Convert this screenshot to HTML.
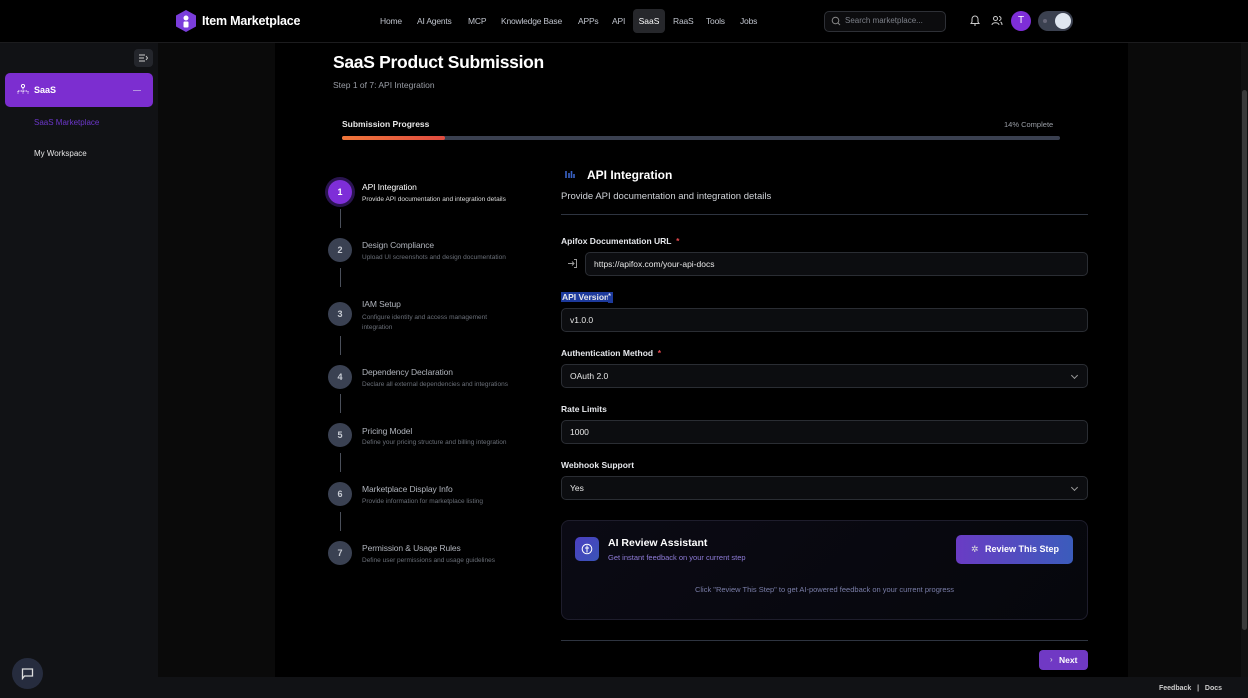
<!DOCTYPE html>
<html><head><meta charset="utf-8"><style>
*{margin:0;padding:0;box-sizing:border-box}
body{width:1248px;height:698px;overflow:hidden;background:#0a0a0a;font-family:"Liberation Sans",sans-serif;color:#fff;position:relative}
.a{position:absolute}
.hdr{left:0;top:0;width:1248px;height:43px;background:#000;border-bottom:1px solid #1c1c1e}
.nav{font-size:8.5px;color:#bfc3cc;top:16px;letter-spacing:-0.2px}
.side{left:0;top:43px;width:158px;height:634px;background:#111215}
.panel{left:275px;top:43px;width:853px;height:634px;background:#000}
.foot{left:0;top:677px;width:1248px;height:21px;background:#111215}
.circ{width:24px;height:24px;border-radius:50%;background:#3a4152;color:#c8ccd4;font-size:9px;font-weight:bold;text-align:center;line-height:24px;left:328px}
.vl{left:339.5px;width:1px;background:#4a4f5a;height:19px}
.st{left:362px;font-size:8.5px;color:#b0b4bc;letter-spacing:-0.1px}
.sd{left:362px;font-size:6.5px;color:#6a6f78}
.lbl{left:561px;font-size:8.5px;font-weight:bold;color:#e6e8ec}
.req{color:#e5484d}
.inp{left:561px;width:527px;height:24px;background:#0c0d10;border:1px solid #2a2d33;border-radius:5px;font-size:8.5px;color:#e8e8e8;padding-left:8px;line-height:22px}
.chev{position:absolute;right:10px;top:8px;width:5px;height:5px;border-right:1px solid #999;border-bottom:1px solid #999;transform:rotate(45deg)}
</style></head><body>
<div class="a hdr"></div>
<svg class="a" style="left:174px;top:9px" width="24" height="24" viewBox="0 0 24 24"><path d="M12 1 L22 6.5 V17.5 L12 23 L2 17.5 V6.5Z" fill="#7a3ddb"/><circle cx="12" cy="9" r="2.5" fill="#fff"/><rect x="9.5" y="12.5" width="5" height="6" rx="1" fill="#fff"/></svg>
<div class="a" style="left:202px;top:14px;font-size:12.5px;font-weight:bold;letter-spacing:-0.2px">Item Marketplace</div>
<div class="a nav" style="left:380px">Home</div>
<div class="a nav" style="left:417px">AI Agents</div>
<div class="a nav" style="left:468px">MCP</div>
<div class="a nav" style="left:501px">Knowledge Base</div>
<div class="a nav" style="left:578px">APPs</div>
<div class="a nav" style="left:612px">API</div>
<div class="a" style="left:633px;top:9px;width:32px;height:24px;background:#26272b;border-radius:4px;font-size:8.5px;color:#fff;text-align:center;line-height:24px">SaaS</div>
<div class="a nav" style="left:673px">RaaS</div>
<div class="a nav" style="left:706px">Tools</div>
<div class="a nav" style="left:740px">Jobs</div>
<div class="a" style="left:824px;top:11px;width:122px;height:21px;border:1px solid #2e3036;border-radius:5px;background:#0c0c0e"></div>
<svg class="a" style="left:831px;top:16px" width="10" height="10" viewBox="0 0 10 10"><circle cx="4.5" cy="4.5" r="3.3" stroke="#888" fill="none"/><path d="M7 7l2 2" stroke="#888"/></svg>
<div class="a" style="left:845px;top:16px;font-size:8px;color:#7d8089">Search marketplace...</div>
<svg class="a" style="left:969px;top:14px" width="12" height="13" viewBox="0 0 12 13"><path d="M2 9.5h8l-1-1.5V5a3 3 0 0 0-6 0v3z M5 11h2" stroke="#ccc" fill="none"/></svg>
<svg class="a" style="left:991px;top:15px" width="12" height="11" viewBox="0 0 12 11"><circle cx="4.5" cy="3.5" r="2" stroke="#ccc" fill="none"/><path d="M1 10c0-3 7-3 7 0M8 1.5a2 2 0 0 1 0 4M9.5 7c1 .5 1.5 1.5 1.5 3" stroke="#ccc" fill="none"/></svg>
<div class="a" style="left:1011px;top:11px;width:20px;height:20px;border-radius:50%;background:#7e2ed8;font-size:10px;text-align:center;line-height:20px">T</div>
<div class="a" style="left:1038px;top:11px;width:35px;height:20px;border-radius:10px;background:#3b4150"></div>
<div class="a" style="left:1043px;top:19px;width:4px;height:4px;border-radius:50%;background:#667"></div>
<div class="a" style="left:1055px;top:13px;width:16px;height:16px;border-radius:50%;background:#dfe6f0"></div>
<div class="a side"></div>
<div class="a" style="left:134px;top:49px;width:19px;height:18px;background:#24262c;border-radius:4px"></div>
<svg class="a" style="left:139px;top:54px" width="9" height="8"><path d="M0 1h6M0 4h5M0 7h6M7 2l1.5 2L7 6" stroke="#ccc" fill="none"/></svg>
<div class="a" style="left:5px;top:73px;width:148px;height:34px;background:#7c2ed0;border-radius:5px"></div>
<svg class="a" style="left:17px;top:84px" width="12" height="12" viewBox="0 0 12 12"><circle cx="6" cy="2" r="1.6" stroke="#fff" fill="none"/><path d="M6 4v3M1 7h10M1 7v3M6 7v3M11 7v3" stroke="#fff" stroke-dasharray="1.5 1" fill="none"/></svg>
<div class="a" style="left:34px;top:85px;font-size:9px;font-weight:bold">SaaS</div>
<div class="a" style="left:133px;top:90px;width:8px;height:1px;background:#b493e0"></div>
<div class="a" style="left:34px;top:118px;font-size:8px;color:#6b36c8">SaaS Marketplace</div>
<div class="a" style="left:34px;top:149px;font-size:8px;color:#e5e5e5">My Workspace</div>
<div class="a panel"></div>
<div class="a" style="left:1241px;top:43px;width:7px;height:634px;background:#111"></div>
<div class="a" style="left:1242px;top:90px;width:5px;height:540px;background:#3a3a3a;border-radius:3px"></div>
<div class="a foot"></div>
<div class="a" style="left:12px;top:658px;width:31px;height:31px;border-radius:50%;background:#262c3e"></div>
<svg class="a" style="left:21px;top:667px" width="13" height="13" viewBox="0 0 13 13"><path d="M1.5 11.5V2h10v7H3.5z" stroke="#ddd" stroke-width="1.3" fill="none"/></svg>
<div class="a" style="left:1159px;top:685px;font-size:7px;color:#ccc;font-weight:bold">Feedback &nbsp;&nbsp;|&nbsp;&nbsp; Docs</div>
<div class="a" style="left:333px;top:52px;font-size:17.5px;font-weight:bold;letter-spacing:-0.3px">SaaS Product Submission</div>
<div class="a" style="left:333px;top:80px;font-size:8.5px;color:#9a9ea6">Step 1 of 7: API Integration</div>
<div class="a" style="left:342px;top:119px;font-size:8.5px;font-weight:bold;color:#e8e8e8">Submission Progress</div>
<div class="a" style="left:1004px;top:120px;font-size:7.5px;color:#9a9ea6">14% Complete</div>
<div class="a" style="left:342px;top:136px;width:718px;height:4px;border-radius:2px;background:#3a4050"></div>
<div class="a" style="left:342px;top:136px;width:103px;height:4px;border-radius:2px;background:linear-gradient(90deg,#f0763a,#e04c40)"></div>
<div class="a circ" style="top:180px;background:#7e2ed8;color:#fff;box-shadow:0 0 0 3px #2a1450"></div>
<div class="a" style="left:328px;top:180px;width:24px;line-height:24px;font-size:9px;font-weight:bold;text-align:center">1</div>
<div class="a st" style="top:182px;color:#fff">API Integration</div>
<div class="a sd" style="top:196px;color:#ddd">Provide API documentation and integration details</div>
<div class="a vl" style="top:209px"></div>
<div class="a circ" style="top:238px">2</div>
<div class="a st" style="top:240px">Design Compliance</div>
<div class="a sd" style="top:254px">Upload UI screenshots and design documentation</div>
<div class="a vl" style="top:268px"></div>
<div class="a circ" style="top:302px">3</div>
<div class="a st" style="top:299px">IAM Setup</div>
<div class="a sd" style="top:313px;width:150px;line-height:10px">Configure identity and access management integration</div>
<div class="a vl" style="top:336px"></div>
<div class="a circ" style="top:365px">4</div>
<div class="a st" style="top:367px">Dependency Declaration</div>
<div class="a sd" style="top:381px">Declare all external dependencies and integrations</div>
<div class="a vl" style="top:394px"></div>
<div class="a circ" style="top:423px">5</div>
<div class="a st" style="top:426px">Pricing Model</div>
<div class="a sd" style="top:439px">Define your pricing structure and billing integration</div>
<div class="a vl" style="top:453px"></div>
<div class="a circ" style="top:482px">6</div>
<div class="a st" style="top:484px">Marketplace Display Info</div>
<div class="a sd" style="top:498px">Provide information for marketplace listing</div>
<div class="a vl" style="top:512px"></div>
<div class="a circ" style="top:541px">7</div>
<div class="a st" style="top:543px">Permission &amp; Usage Rules</div>
<div class="a sd" style="top:557px">Define user permissions and usage guidelines</div>
<svg class="a" style="left:565px;top:170px" width="10" height="9"><path d="M1 1v7M4 3v5M6.5 1v7M9 4v4" stroke="#3a63c8" stroke-width="1.6"/></svg>
<div class="a" style="left:587px;top:168px;font-size:12px;font-weight:bold">API Integration</div>
<div class="a" style="left:561px;top:191px;font-size:9.5px;color:#d0d3d8">Provide API documentation and integration details</div>
<div class="a" style="left:561px;top:214px;width:527px;height:1px;background:#2e3440"></div>
<div class="a lbl" style="top:236px">Apifox Documentation URL <span class="req">&nbsp;*</span></div>
<svg class="a" style="left:567px;top:258px" width="11" height="11" viewBox="0 0 11 11"><path d="M1 5.5h6M5 3.5l2 2-2 2M7 1.5h2.5v8H7" stroke="#999" fill="none"/></svg>
<div class="a inp" style="left:585px;top:252px;width:503px">https://apifox.com/your-api-docs</div>
<div class="a lbl" style="top:292px;background:#1d3a9c;padding:0 1px">API Version</div>
<div class="a" style="left:608px;top:292px;width:5px;height:11px;background:#1d3a9c;font-size:8px">*</div>
<div class="a inp" style="top:308px">v1.0.0</div>
<div class="a lbl" style="top:348px">Authentication Method <span class="req">&nbsp;*</span></div>
<div class="a inp" style="top:364px">OAuth 2.0<span class="chev"></span></div>
<div class="a lbl" style="top:404px">Rate Limits</div>
<div class="a inp" style="top:420px">1000</div>
<div class="a lbl" style="top:460px">Webhook Support</div>
<div class="a inp" style="top:476px">Yes<span class="chev"></span></div>
<div class="a" style="left:561px;top:520px;width:527px;height:100px;border:1px solid #1e1d2c;border-radius:8px;background:linear-gradient(135deg,#0b0a14,#06070c)"></div>
<div class="a" style="left:575px;top:537px;width:24px;height:24px;border-radius:5px;background:linear-gradient(135deg,#4b3fc0,#3a54b8)"></div>
<svg class="a" style="left:581px;top:543px" width="12" height="12"><circle cx="6" cy="6" r="4.8" stroke="#fff" fill="none"/><path d="M6 2.5v7M4 5h4" stroke="#fff" fill="none"/></svg>
<div class="a" style="left:608px;top:537px;font-size:10.5px;font-weight:bold">AI Review Assistant</div>
<div class="a" style="left:608px;top:553px;font-size:7.5px;color:#8f7cd8">Get instant feedback on your current step</div>
<div class="a" style="left:956px;top:535px;width:117px;height:29px;border-radius:5px;background:linear-gradient(90deg,#6a3cc4,#3b5cbc);font-size:9px;font-weight:bold;line-height:29px;padding-left:29px">Review This Step</div>
<div class="a" style="left:971px;top:544px;font-size:9px;color:#ddd">✲</div>
<div class="a" style="left:561px;top:585px;width:527px;text-align:center;font-size:7.5px;color:#7a7ea8">Click "Review This Step" to get AI-powered feedback on your current progress</div>
<div class="a" style="left:561px;top:640px;width:527px;height:1px;background:#2e3440"></div>
<div class="a" style="left:1039px;top:650px;width:49px;height:20px;border-radius:4px;background:#7039c4;font-size:8.5px;font-weight:bold;line-height:20px;padding-left:20px">Next</div>
<div class="a" style="left:1050px;top:655px;font-size:8px;color:#ddd">›</div>
</body></html>
